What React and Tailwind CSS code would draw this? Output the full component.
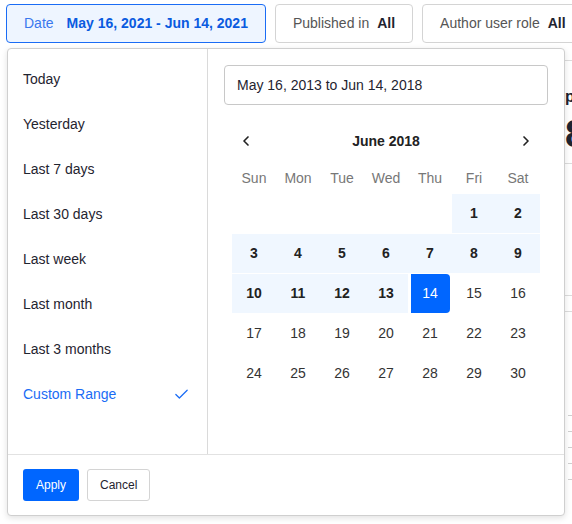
import { Check, ChevronLeft, ChevronRight } from "lucide-react";

const presets = [
  "Today",
  "Yesterday",
  "Last 7 days",
  "Last 30 days",
  "Last week",
  "Last month",
  "Last 3 months",
];

const dayNames = ["Sun", "Mon", "Tue", "Wed", "Thu", "Fri", "Sat"];

// June 2018 starts on a Friday
const weeks = [
  [null, null, null, null, null, 1, 2],
  [3, 4, 5, 6, 7, 8, 9],
  [10, 11, 12, 13, 14, 15, 16],
  [17, 18, 19, 20, 21, 22, 23],
  [24, 25, 26, 27, 28, 29, 30],
];

function DayCell({ day }) {
  if (day === null) return <div className="h-[39px]" />;
  const inRange = day < 14;
  const selected = day === 14;
  if (selected) {
    return (
      <div className="h-[39px] flex justify-center">
        <div className="w-[39px] h-[39px] bg-[#0066ff] text-white rounded-r-[4px] flex items-center justify-center">
          {day}
        </div>
      </div>
    );
  }
  return (
    <div
      className={`h-[39px] flex items-center justify-center ${
        inRange ? "bg-[#f0f7ff] font-bold text-[#222]" : "text-[#333]"
      }`}
    >
      {day}
    </div>
  );
}

function FilterButton({ label, value, active }) {
  return (
    <div
      className={`h-[39px] shrink-0 flex items-center px-[17px] rounded-[4px] border text-[14px] ${
        active
          ? "border-[#1a6cf5] bg-[#eef5ff] text-[#3a78ee]"
          : "border-[#d4d4d4] bg-white text-[#555]"
      }`}
    >
      <span>{label}</span>
      <span
        className={`font-bold ${active ? "ml-[13px] text-[#0a5be0]" : "ml-[8px] text-[#1f2430]"}`}
      >
        {value}
      </span>
    </div>
  );
}

export default function App() {
  return (
    <div
      className="relative w-[572px] h-[524px] overflow-hidden bg-white"
      style={{ fontFamily: '"Liberation Sans", Arial, sans-serif' }}
    >
      {/* 篩選列 */}
      <div className="flex gap-[9px] pt-[4px] pl-[6px]">
        <FilterButton label="Date" value="May 16, 2021 - Jun 14, 2021" active />
        <FilterButton label="Published in" value="All" />
        <FilterButton label="Author user role" value="All" />
      </div>

      {/* 背景內容 (被遮住) */}
      <div className="absolute left-[565px] top-[60px] w-[40px] h-[464px] text-[#1f2430]">
        <div className="border-t border-[#dcdcdc]" />
        <div className="mt-[28px] text-[16px] font-bold leading-none">p</div>
        <div className="mt-[10px] text-[38px] font-bold leading-none">8</div>
        <div className="mt-[10px] border-t border-[#dcdcdc]" />
        <div className="mt-[131px] border-t border-[#dcdcdc]" />
        <div className="mt-[15px] border-t border-[#dcdcdc]" />
        <div className="mt-[103px] ml-[3px] flex flex-col gap-[15px]">
          <div className="border-t border-[#cfcfcf]" />
          <div className="border-t border-[#cfcfcf]" />
          <div className="border-t border-[#cfcfcf]" />
          <div className="border-t border-[#cfcfcf]" />
          <div className="border-t border-[#cfcfcf]" />
        </div>
      </div>

      {/* 日期選擇彈出層 */}
      <div className="absolute left-[7px] top-[48px] w-[558px] h-[468px] bg-white border border-[#cfcfcf] rounded-[4px] shadow-[0_2px_6px_rgba(0,0,0,0.12)] flex flex-col">
        <div className="flex flex-1 min-h-0">
          <div className="w-[200px] border-r border-[#dadada] pt-[8px]">
            {presets.map((p) => (
              <div key={p} className="h-[45px] flex items-center px-[15px] text-[14px] text-[#1f2430]">
                {p}
              </div>
            ))}
            <div className="h-[45px] flex items-center justify-between pl-[15px] pr-[17px] text-[14px] text-[#1a6cf5]">
              <span>Custom Range</span>
              <Check size={17} strokeWidth={1.75} />
            </div>
          </div>

          <div className="flex-1 pt-[16px] px-[16px]">
            <div className="h-[40px] border border-[#c8c8c8] rounded-[4px] flex items-center px-[12px] text-[14px] text-[#1f2430]">
              May 16, 2013 to Jun 14, 2018
            </div>
            <div className="px-[8px]">
              <div className="h-[56px] pt-[16px] flex items-center justify-between text-[#222]">
                <ChevronLeft size={16} strokeWidth={2.5} className="ml-[6px]" />
                <span className="text-[14px] font-bold">June 2018</span>
                <ChevronRight size={16} strokeWidth={2.5} className="mr-[6px]" />
              </div>
              <div className="grid grid-cols-7 h-[16px] text-[14px] text-[#777] mt-[7px] mb-[10px]">
                {dayNames.map((d) => (
                  <div key={d} className="flex items-center justify-center">
                    {d}
                  </div>
                ))}
              </div>
              <div className="flex flex-col gap-[1px] text-[14px]">
                {weeks.map((w, i) => (
                  <div key={i} className="grid grid-cols-7">
                    {w.map((d, j) => (
                      <DayCell key={j} day={d} />
                    ))}
                  </div>
                ))}
              </div>
            </div>
          </div>
        </div>

        <div className="h-[61px] border-t border-[#e2e2e2] flex items-center gap-[8px] px-[15px]">
          <button className="h-[32px] px-[13px] rounded-[3px] bg-[#0066ff] text-white text-[12px]">
            Apply
          </button>
          <button className="h-[32px] px-[12px] rounded-[3px] border border-[#d4d4d4] bg-white text-[#1f2430] text-[12px]">
            Cancel
          </button>
        </div>
      </div>
    </div>
  );
}
